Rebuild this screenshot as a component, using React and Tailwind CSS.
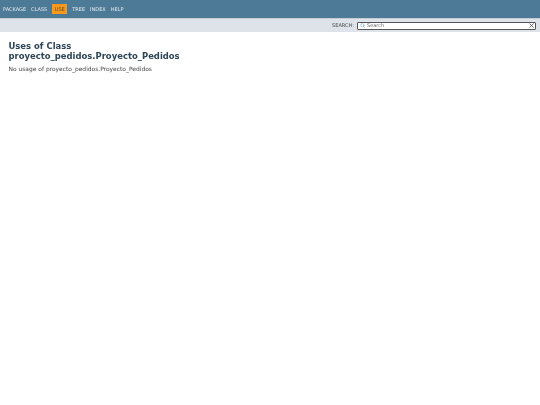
import { Search, X } from 'lucide-react';

const NAV_ITEMS = ['PACKAGE', 'CLASS', 'USE', 'TREE', 'INDEX', 'HELP'];

function App() {
  return (
    <div className="min-h-[405px] bg-white font-['DejaVu_Sans',sans-serif] text-[#474747] [will-change:transform]">
      <div className="h-[18px] bg-[#4D7A97] flex items-center pl-[3px] gap-[5px] text-[5px] text-[#e4ebf0]">
        {NAV_ITEMS.map((item) =>
          item === 'USE' ? (
            <span key={item} className="bg-[#F8981D] text-[#5c4a30] px-[2.5px] h-[10px] leading-[11px]">{item}</span>
          ) : (
            <span key={item} className="pt-[1px]">{item}</span>
          )
        )}
      </div>
      <div className="h-[14px] bg-[#dee3e9] flex items-center justify-end pr-[4px] text-[5px] border-t border-[#c5ccd4]">
        <span className="mr-[3px]">SEARCH:</span>
        <div className="w-[179px] h-[8px] bg-white border border-[#555] rounded-[1px] flex items-center relative">
          <Search size={5} strokeWidth={2.5} className="ml-[2px] text-[#6f9fc4]" />
          <span className="ml-[2px] text-[#666] text-[5px]">Search</span>
          <X size={7} strokeWidth={3} className="absolute right-0 text-[#555]" />
        </div>
      </div>
      <div className="pl-[8.5px] pt-[9px]">
        <h1 className="text-[8.45px] leading-[10px] font-bold text-[#2c4557]">
          Uses of Class<br />proyecto_pedidos.Proyecto_Pedidos
        </h1>
        <p className="text-[5.95px] mt-[4px]">No usage of proyecto_pedidos.Proyecto_Pedidos</p>
      </div>
    </div>
  );
}

export default App;
